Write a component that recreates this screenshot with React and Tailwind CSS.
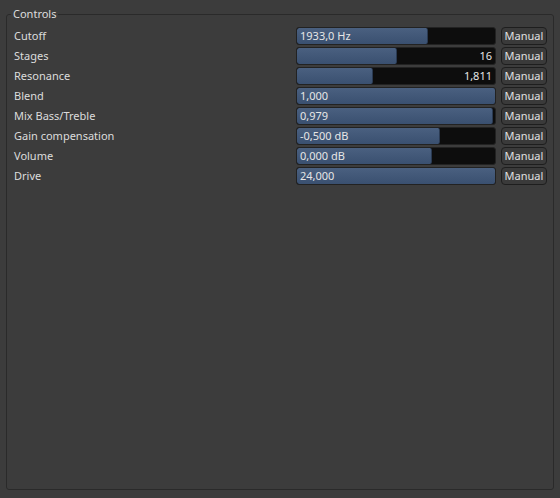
import React from 'react';

const rows = [
    { label: 'Cutoff', value: '1933,0 Hz', fill: 131, align: 'left' },
    { label: 'Stages', value: '16', fill: 100, align: 'right' },
    { label: 'Resonance', value: '1,811', fill: 76, align: 'right' },
    { label: 'Blend', value: '1,000', fill: 199, align: 'left' },
    { label: 'Mix Bass/Treble', value: '0,979', fill: 196, align: 'left' },
    { label: 'Gain compensation', value: '-0,500 dB', fill: 143, align: 'left' },
    { label: 'Volume', value: '0,000 dB', fill: 135, align: 'left' },
    { label: 'Drive', value: '24,000', fill: 199, align: 'left' },
];

const Bar = ({ value, fill, align }) => (
    <div className="relative w-[200px] h-[18px] rounded-[3px] bg-[#0d0d0d] border border-[#222] overflow-hidden">
        <div
            className="absolute left-0 top-0 bottom-0 rounded-[2px] bg-gradient-to-b from-[#4a6080] to-[#3a5070] border-r border-[#2a3a52]"
            style={{ width: fill }}
        />
        <div className={`relative h-full flex items-center px-[3px] text-[11px] text-[#e6e6e6] ${align === 'right' ? 'justify-end' : 'justify-start'}`}>
            {value}
        </div>
    </div>
);

export default function App() {
    return (
        <div className="w-[560px] h-[498px] bg-[#3c3c3c] pt-[14px] px-[6px] pb-[8px] text-[#dcdcdc]" style={{ fontFamily: '"Noto Sans", "Open Sans", sans-serif' }}>
            <div className="relative h-[476px] w-[548px] border border-[#2a2a2a] rounded-[3px]">
                {/* Group title */}
                <div className="absolute -top-[8px] left-[4px] px-[2px] bg-[#3c3c3c] text-[11px] leading-[14px] text-[#dcdcdc]">Controls</div>

                <div className="flex flex-col gap-[2px] pt-[12px] pl-[7px] pr-[6px]">
                    {rows.map((r) => (
                        <div key={r.label} className="flex items-center h-[18px]">
                            <div className="flex-1 text-[11px] text-[#dcdcdc]">{r.label}</div>
                            <Bar value={r.value} fill={r.fill} align={r.align} />
                            <button className="ml-[5px] w-[46px] h-[18px] rounded-[4px] bg-[#3a3a3a] border border-[#1e1e1e] text-[11px] text-[#e0e0e0] flex items-center justify-center">
                                Manual
                            </button>
                        </div>
                    ))}
                </div>
            </div>
        </div>
    );
}
